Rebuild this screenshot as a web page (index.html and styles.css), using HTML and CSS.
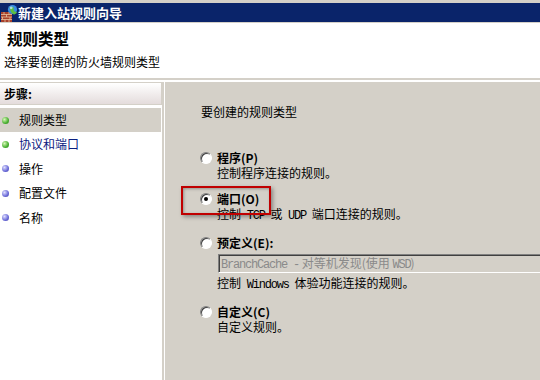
FILE: index.html
```html
<!DOCTYPE html>
<html lang="zh-CN">
<head>
    <meta charset="UTF-8">
    <title>新建入站规则向导</title>
    <link rel="stylesheet" href="styles.css">
</head>
<body>
    <div class="topstrip"></div>
    <div class="titlebar">
        <svg class="app-icon" width="18" height="18" viewBox="0 0 18 18">
            <!-- brick wall -->
            <rect x="1" y="8" width="11" height="10" fill="#a8402a"/>
            <path d="M1 10.5h11M1 13h11M1 15.5h11M4 8v2.5M9 8v2.5M6.5 10.5V13M2.5 13v2.5M10 13v2.5M5 15.5V18M9 15.5V18" stroke="#e8c0a0" stroke-width="0.8"/>
            <!-- globe -->
            <circle cx="12.5" cy="5.5" r="4.6" fill="#3a8ee0"/>
            <path d="M9.5 3.5c1.5-1 3-1.2 4 0s-.5 2.5.5 3.5 2.5.5 3 1.5c-1 1.5-2.5 2-3.5 2-.5-1.5-2-1-2.5-2.5s-1-2-1.5-4.5z" fill="#5cc040"/>
            <circle cx="11.2" cy="3.8" r="1.4" fill="#bfe6ff" opacity="0.8"/>
        </svg>
        <span>新建入站规则向导</span>
    </div>

    <div class="header">
        <h1>规则类型</h1>
        <p>选择要创建的防火墙规则类型</p>
    </div>

    <div class="main">
        <div class="steps">
            <div class="steps-head">步骤:</div>
            <ul class="step-list">
                <li class="step active"><span class="dot green"></span>规则类型</li>
                <li class="step current"><span class="dot green"></span>协议和端口</li>
                <li class="step"><span class="dot blue"></span>操作</li>
                <li class="step"><span class="dot blue"></span>配置文件</li>
                <li class="step"><span class="dot blue"></span>名称</li>
            </ul>
        </div>

        <div class="content">
            <div class="intro">要创建的规则类型</div>

            <div class="option">
                <span class="radio"></span>
                <div class="label">程序(P)</div>
                <div class="desc">控制程序连接的规则。</div>
            </div>

            <div class="option">
                <div class="highlight"></div>
                <span class="radio checked"></span>
                <div class="label">端口(O)</div>
                <div class="desc">控制 <span class="m">TCP</span> 或 <span class="m">UDP</span> 端口连接的规则。</div>
            </div>

            <div class="option">
                <span class="radio"></span>
                <div class="label">预定义(E):</div>
                <div class="select"><span class="m">BranchCache -</span> 对等机发现(使用 <span class="m">WSD</span>)</div>
                <div class="desc desc-after-select">控制 <span class="m">Windows</span> 体验功能连接的规则。</div>
            </div>

            <div class="option">
                <span class="radio"></span>
                <div class="label">自定义(C)</div>
                <div class="desc">自定义规则。</div>
            </div>
        </div>
    </div>
</body>
</html>
```

FILE: styles.css
```css
body {
    margin: 0;
    width: 540px;
    height: 380px;
    overflow: hidden;
    background: white;
    font-family: "Noto Sans CJK SC", "Liberation Sans", sans-serif;
    font-size: 12px;
    color: #000;
}
.topstrip {
    height: 3px;
    background: #d4d0c8;
}
.titlebar {
    height: 19px;
    background: #0a246a;
    color: white;
    font-weight: bold;
    font-size: 13px;
    display: flex;
    align-items: center;
    border-bottom: 1px solid #d4d0c8;
}
.app-icon {
    flex: none;
}
.titlebar span {
    line-height: 19px;
}
.header {
    height: 55px;
    border-bottom: 2px solid #d4d0c8;
    padding-left: 4px;
}
.header h1 {
    margin: 0;
    padding: 5px 0 0 3px;
    font-size: 15.5px;
    line-height: 20px;
    font-weight: bold;
}
.header p {
    margin: 6px 0 0;
    line-height: 15px;
}
.main {
    display: flex;
    margin-top: 2px;
    height: 299px;
}
.steps {
    width: 162px;
    border-right: 2px solid #d4d0c8;
    margin-right: 1px;
    flex: none;
}
.steps-head {
    height: 21px;
    line-height: 21px;
    padding-left: 4px;
    font-weight: bold;
    border: 1px solid #d4d0c8;
    border-left: none;
    background: linear-gradient(#ffffff, #e4dcdc);
}
.step-list {
    list-style: none;
    margin: 3px 0 0;
    padding: 0;
}
.step {
    height: 24.5px;
    line-height: 24.5px;
    display: flex;
    align-items: center;
    padding-left: 2px;
    margin-right: 1px;
}
.step.active {
    background: #d4d0c8;
    height: 24px;
    line-height: 24px;
}
.step.current {
    color: #0a2080;
}
.dot {
    width: 7px;
    height: 7px;
    border-radius: 50%;
    margin-right: 10px;
    flex: none;
}
.dot.green {
    background: radial-gradient(circle at 35% 35%, #d8f8b8, #48b030 60%, #2a7a18);
}
.dot.blue {
    background: radial-gradient(circle at 35% 35%, #e0e0ff, #6a6ad8 60%, #3a3aa0);
}
.content {
    flex: 1;
    background: #d4d0c8;
    padding: 22px 0 0 35px;
    overflow: hidden;
}
.intro {
    line-height: 15px;
    margin-left: 1px;
    margin-bottom: 31px;
}
.option {
    position: relative;
    display: grid;
    grid-template-columns: 17px 1fr;
    line-height: 15px;
    margin-bottom: 11px;
}
.option .radio {
    grid-row: 1;
    grid-column: 1;
    align-self: center;
}
.option .label,
.option .desc,
.option .select {
    grid-column: 2;
}
.label {
    font-weight: bold;
}
.radio {
    width: 12px;
    height: 12px;
    box-sizing: border-box;
    border-radius: 50%;
    border: 1px solid;
    border-color: #808080 #ffffff #ffffff #808080;
    box-shadow: inset 1px 1px 0 #404040;
    background: white;
    position: relative;
}
.radio.checked::after {
    content: "";
    position: absolute;
    left: 3px;
    top: 3px;
    width: 4px;
    height: 4px;
    border-radius: 50%;
    background: #000;
}
.highlight {
    position: absolute;
    left: -19px;
    top: -5px;
    width: 90px;
    height: 29px;
    box-sizing: border-box;
    border: 2px solid #c00000;
    box-shadow: 2px 2px 4px rgba(0, 0, 0, 0.35), inset 1px 1px 3px rgba(0, 0, 0, 0.3);
}
.select {
    margin: 4px 0 0 1px;
    width: 340px;
    height: 19px;
    box-sizing: border-box;
    border: 1px solid;
    border-color: #808080 #ffffff #ffffff #808080;
    box-shadow: inset 1px 1px 0 #404040;
    color: #8a8a8a;
    padding-left: 2px;
    line-height: 16px;
    white-space: nowrap;
}
.desc-after-select {
    margin-top: 2px;
}
.m {
    font-family: "Liberation Mono", monospace;
    font-size: 12px;
    letter-spacing: -1.2px;
}
.desc .m {
    margin: 0 3px;
}
```
